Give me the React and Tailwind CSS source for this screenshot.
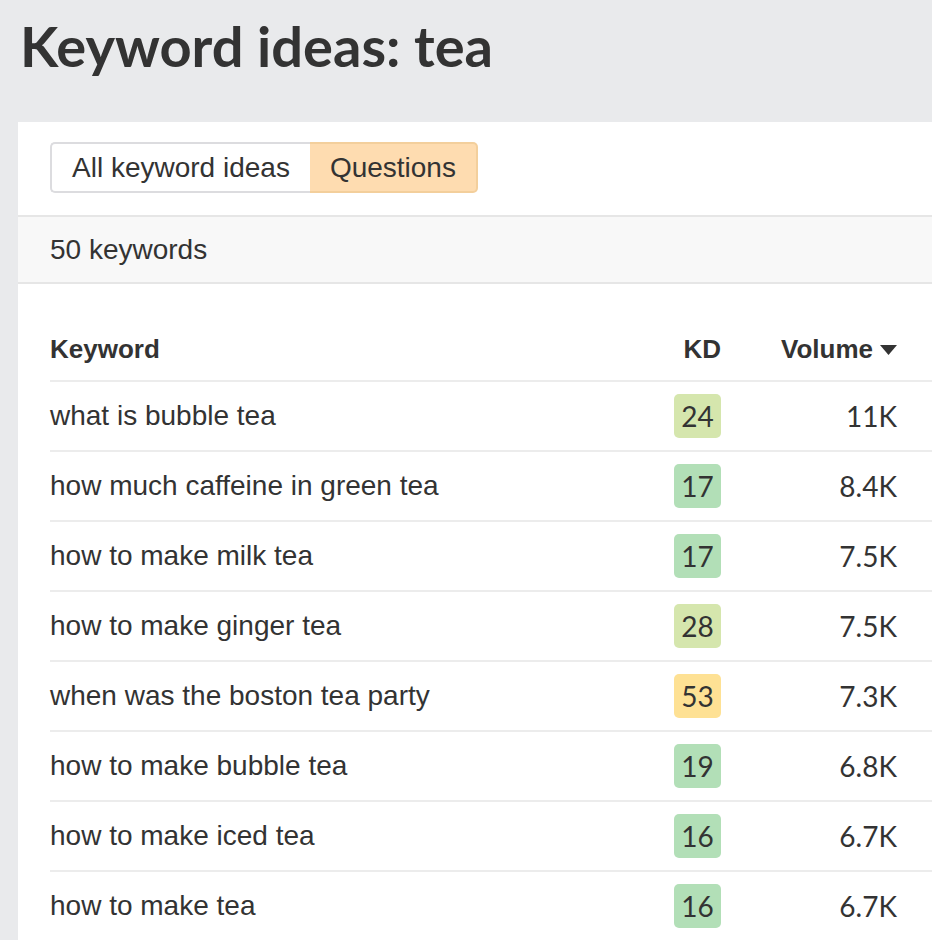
import React from "react";

const rows = [
  { kw: "what is bubble tea", kd: 24, vol: "11K" },
  { kw: "how much caffeine in green tea", kd: 17, vol: "8.4K" },
  { kw: "how to make milk tea", kd: 17, vol: "7.5K" },
  { kw: "how to make ginger tea", kd: 28, vol: "7.5K" },
  { kw: "when was the boston tea party", kd: 53, vol: "7.3K" },
  { kw: "how to make bubble tea", kd: 19, vol: "6.8K" },
  { kw: "how to make iced tea", kd: 16, vol: "6.7K" },
  { kw: "how to make tea", kd: 16, vol: "6.7K" },
];

function kdColor(kd) {
  if (kd >= 50) return "bg-[#fee194]";
  if (kd >= 20) return "bg-[#d5e6ad]";
  return "bg-[#b2dfb7]";
}

function App() {
  return (
    <div className="min-h-screen bg-[#e9eaec] font-['Liberation_Sans',Arial,sans-serif] text-[#333]">
      <h1 className="pl-5 pt-[11px] pb-[41px] font-['Lato',sans-serif] text-[56px] font-bold leading-[70px]">
        Keyword ideas: tea
      </h1>
      <div className="ml-[18px] bg-white">
        <div className="px-8 pt-5 pb-[22px]">
          <div className="flex h-[51px] w-max text-[28px]">
            <button className="rounded-l-[5px] border-2 border-r-0 border-[#dcdcdf] bg-white px-5">
              All keyword ideas
            </button>
            <button className="rounded-r-[5px] border-2 border-l-0 border-[#f3cf9c] bg-[#fedcb0] px-5">
              Questions
            </button>
          </div>
        </div>
        <div className="flex h-[69px] items-center border-y-2 border-[#e6e6e6] bg-[#f8f8f8] px-8 text-[28px]">
          50 keywords
        </div>
        <div className="pl-8 pt-[34px]">
          <div className="flex h-[64px] items-center border-b-2 border-[#ececec] text-[26px] font-bold">
            <div className="flex-1">Keyword</div>
            <div className="w-[60px] text-right">KD</div>
            <div className="flex w-[211px] items-center justify-end gap-[7px] pr-[35px]">
              Volume
              <svg width="17" height="10" viewBox="0 0 17 10" className="mt-[2px]">
                <path d="M0 0 H17 L8.5 10 Z" fill="#333" />
              </svg>
            </div>
          </div>
          {rows.map((r) => (
            <div
              key={r.kw}
              className="flex h-[70px] items-center border-b-2 border-[#ececec] text-[28px]"
            >
              <div className="flex-1">{r.kw}</div>
              <div className="flex w-[60px] justify-end font-['Lato',sans-serif] text-[28px]">
                <span
                  className={`flex h-[44px] w-[47px] items-center justify-center rounded-[5px] ${kdColor(r.kd)}`}
                >
                  {r.kd}
                </span>
              </div>
              <div className="w-[211px] pr-[35px] text-right font-['Lato',sans-serif] text-[28px]">
                {r.vol}
              </div>
            </div>
          ))}
        </div>
      </div>
    </div>
  );
}

export default App;
